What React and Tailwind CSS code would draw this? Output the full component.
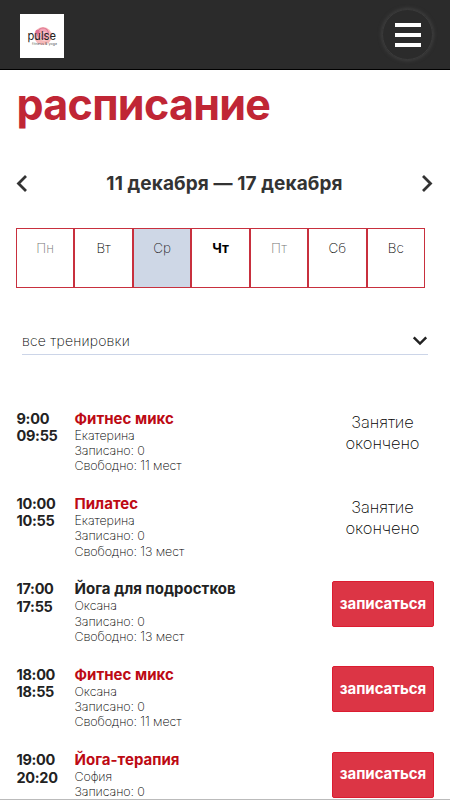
import React, { useState } from "react";

const days = [
  { label: "Пн", style: "font-extralight text-[#777]" },
  { label: "Вт", style: "font-extralight text-black" },
  { label: "Ср", style: "font-extralight text-[#222] bg-[#ced7e6]" },
  { label: "Чт", style: "font-bold text-black" },
  { label: "Пт", style: "font-extralight text-[#777]" },
  { label: "Сб", style: "font-extralight text-black" },
  { label: "Вс", style: "font-extralight text-black" },
];

const lessons = [
  { start: "9:00", end: "09:55", title: "Фитнес микс", coach: "Екатерина", booked: 0, free: 11, red: true, finished: true },
  { start: "10:00", end: "10:55", title: "Пилатес", coach: "Екатерина", booked: 0, free: 13, red: true, finished: true },
  { start: "17:00", end: "17:55", title: "Йога для подростков", coach: "Оксана", booked: 0, free: 13 },
  { start: "18:00", end: "18:55", title: "Фитнес микс", coach: "Оксана", booked: 0, free: 11, red: true },
  { start: "19:00", end: "20:20", title: "Йога-терапия", coach: "София", booked: 0, red: true },
];

const Logo = () => (
  <svg className="block h-11 w-11 bg-white" viewBox="0 0 44 44">
    <circle cx="23" cy="22" r="9" fill="#f6b9b9" />
    <circle cx="23" cy="19.5" r="5.5" fill="#f3a3b4" stroke="#df7894" strokeWidth="1.2" />
    <circle cx="24" cy="22.5" r="4" fill="none" stroke="#f9d9da" strokeWidth="1" />
    <circle cx="17.5" cy="18" r="2.2" fill="#df6f91" />
    <text x="7.5" y="26" fontFamily="Inter, sans-serif" fontSize="12" fontWeight="400" fill="#222" textLength="28.5" lengthAdjust="spacingAndGlyphs">
      pulse
    </text>
    <text x="12" y="30.5" fontFamily="Inter, sans-serif" fontSize="3.5" fill="#555" textLength="25">
      fitness &amp; yoga
    </text>
  </svg>
);

const Header = () => (
  <header className="h-[70px] shrink-0 bg-[#2b2b2b] border-b border-black flex items-center justify-between pl-5 pr-[17px]">
    <div className="mt-[3px]">
      <Logo />
    </div>
    <button className="h-[51px] w-[51px] rounded-full border border-[#3b3b3b] shadow-[0_0_4px_#4a4a4a] flex flex-col items-center justify-center gap-[6px]">
      <span className="h-[4px] w-[26px] bg-white" />
      <span className="h-[4px] w-[26px] bg-white" />
      <span className="h-[4px] w-[26px] bg-white" />
    </button>
  </header>
);

const Chevron = ({ d, className }) => (
  <svg className={className} viewBox="0 0 18 18" fill="none" stroke="currentColor" strokeWidth="2.8">
    <path d={d} />
  </svg>
);

const Lesson = ({ lesson }) => (
  <div className="h-[85.4px] shrink-0 flex">
    <div className="w-[58px] text-[14.5px] leading-[17.5px] tracking-[-0.3px] font-bold text-[#222]">
      <div>{lesson.start}</div>
      <div>{lesson.end}</div>
    </div>
    <div className="flex-1 whitespace-nowrap text-[12.5px] leading-[15.4px] tracking-[-0.1px] font-extralight text-black">
      <div className={`text-[15px] leading-[18px] tracking-[0.03px] font-bold ${lesson.red ? "text-[#bd0a14]" : "text-[#222]"}`}>
        {lesson.title}
      </div>
      <div>{lesson.coach}</div>
      <div>Записано: {lesson.booked}</div>
      {lesson.free && <div>Свободно: {lesson.free} мест</div>}
    </div>
    <div className="w-[102px]">
      {lesson.finished ? (
        <div className="pt-[2px] pr-px text-center text-[16.5px] leading-[21px] tracking-[-0.1px] font-extralight text-black">
          Занятие
          <br />
          окончено
        </div>
      ) : (
        <button className="mt-[0.5px] h-[46px] w-full rounded-[2px] border border-[#dc1c30] bg-[#dc3545] text-[15px] tracking-[-0.05px] font-bold text-white">
          записаться
        </button>
      )}
    </div>
  </div>
);

const App = () => {
  const [week] = useState("11 декабря — 17 декабря");

  return (
    <div className="relative h-[800px] w-[450px] overflow-hidden bg-white font-['Inter','Noto_Sans',sans-serif] flex flex-col">
      <Header />
      <h1 className="ml-[16.5px] mt-[6px] h-[60px] shrink-0 text-[43px] leading-[56px] tracking-[-0.7px] font-bold text-[#c02635]">
        расписание
      </h1>
      <div className="mt-[33px] h-[30px] shrink-0 pl-[14px] pr-[15px] flex items-center justify-between text-[#333]">
        <Chevron className="h-[18px] w-[18px]" d="M12 1 L4.5 8.5 L12 16" />
        <div className="mt-px text-[19px] tracking-[0.1px] font-bold">{week}</div>
        <Chevron className="h-[18px] w-[18px]" d="M6 1 L13.5 8.5 L6 16" />
      </div>
      <div className="ml-4 mt-[29px] h-[60px] w-[409px] shrink-0 flex">
        {days.map((day) => (
          <div key={day.label} className={`flex-1 border border-[#c8303e] pt-[9px] text-center text-[13.5px] leading-[20px] ${day.style}`}>
            {day.label}
          </div>
        ))}
      </div>
      <div className="mx-[22px] mt-[40px] h-[27px] shrink-0 border-b border-[#ccd5e8] flex items-center justify-between text-[14px] tracking-[0.2px] font-extralight text-black">
        <span className="-mt-[2px]">все тренировки</span>
        <Chevron className="-mt-[2px] h-[16px] w-[16px] text-[#222]" d="M2 6 L9 13 L16 6" />
      </div>
      <div className="mt-[54.5px] pl-[16.5px] pr-[16px] flex flex-col">
        {lessons.map((lesson) => (
          <Lesson key={lesson.start} lesson={lesson} />
        ))}
      </div>
      <div className="absolute bottom-0 left-0 h-px w-full bg-[#bbb]" />
    </div>
  );
};

export default App;
